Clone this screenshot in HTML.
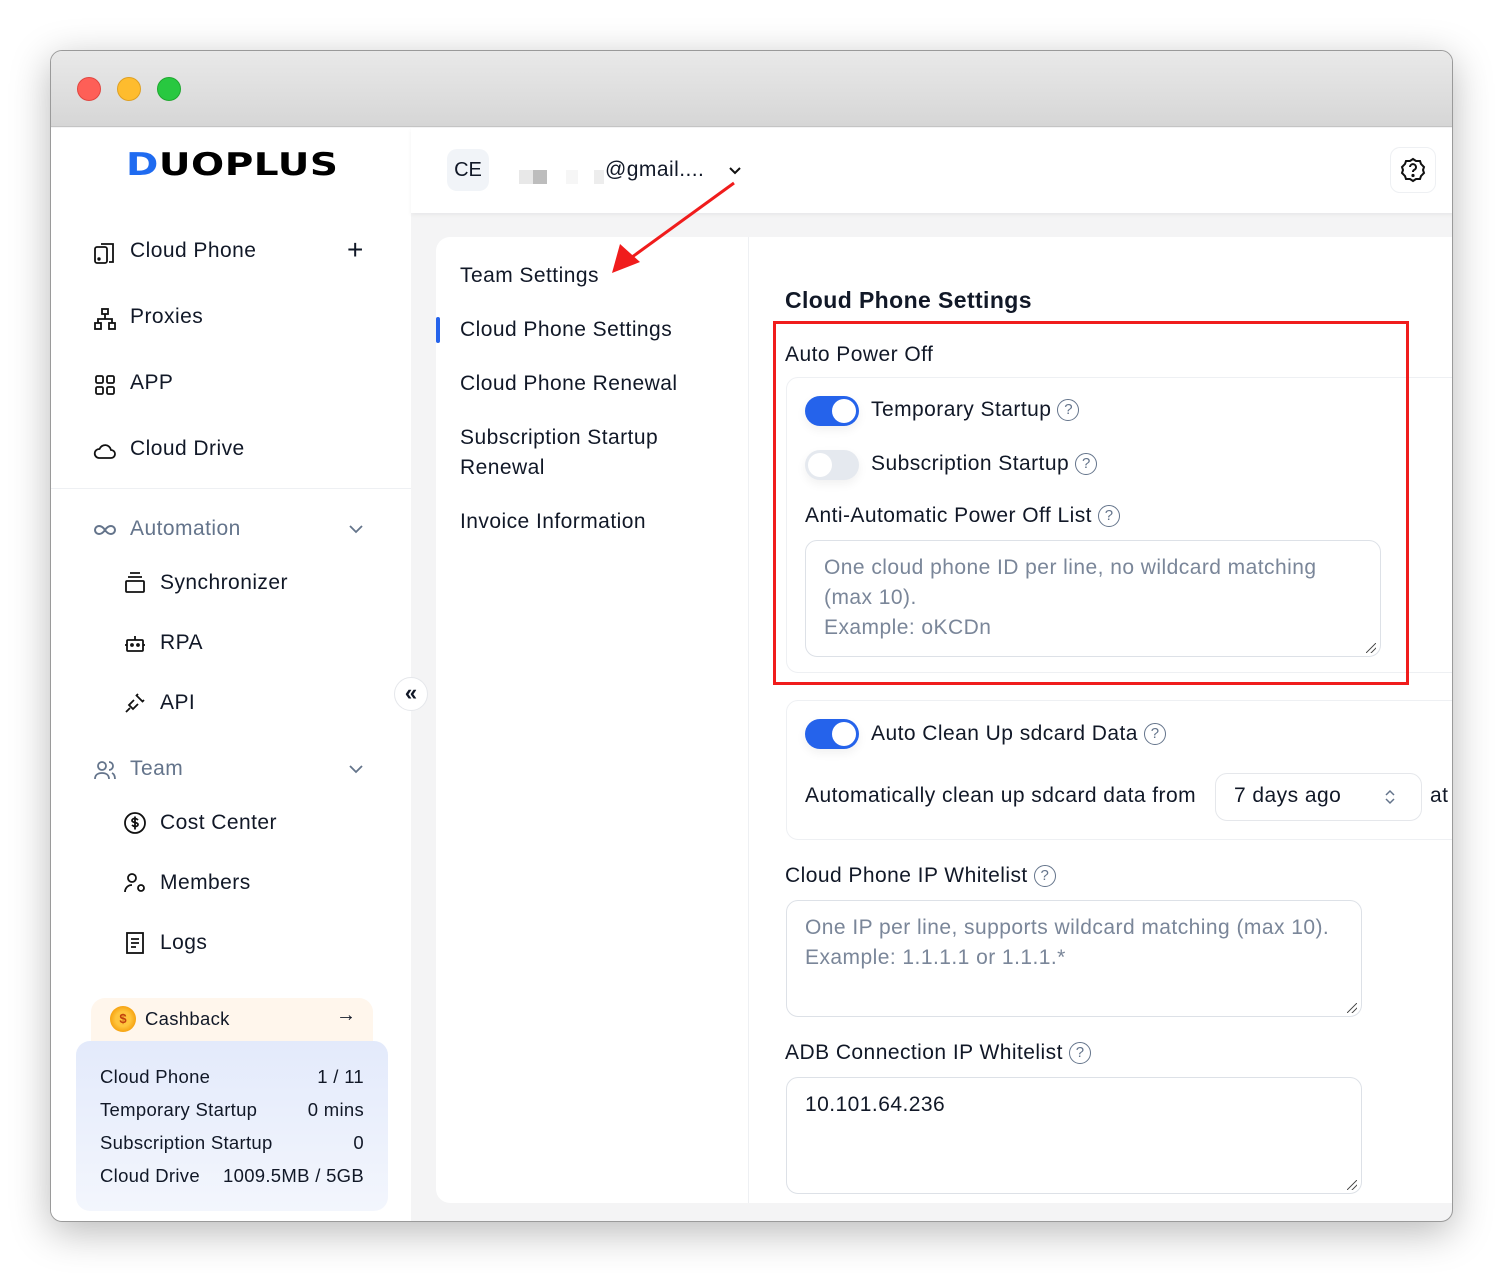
<!DOCTYPE html>
<html><head><meta charset="utf-8"><style>
*{margin:0;padding:0;box-sizing:border-box}
body{width:1503px;height:1273px;background:#fff;font-family:"Liberation Sans",sans-serif;color:#111827;position:relative;overflow:hidden}
.win{position:absolute;left:50px;top:50px;width:1403px;height:1172px;border-radius:12px;overflow:hidden;background:#f4f4f5;box-shadow:0 10px 40px rgba(0,0,0,.28);border:1px solid #9a9a9a}
.tb{position:absolute;left:0;top:0;width:100%;height:76px;background:linear-gradient(#e9e9e9,#d6d6d6);border-bottom:1px solid #c4c4c4}
.dot{position:absolute;top:26px;width:24px;height:24px;border-radius:50%}
.a{position:absolute;white-space:nowrap}
.side{position:absolute;left:0;top:77px;width:360px;height:1100px;background:#fff}
.t20{font-size:21px;letter-spacing:.45px}
.gray{color:#64748b}
.hdr{position:absolute;left:360px;top:77px;width:1043px;height:85px;background:#fff;box-shadow:0 2px 4px rgba(0,0,0,.05)}
.card{position:absolute;left:385px;top:186px;width:1030px;height:966px;background:#fff;border-radius:14px}
.sec{position:absolute;border:1px solid #eef0f3;border-radius:12px}
.ta{position:absolute;border:1px solid #dde1e7;border-radius:12px;font-size:21px;letter-spacing:.45px;line-height:30px;color:#7a8699;padding:12px 18px;white-space:normal}
.tog{position:absolute;width:54px;height:30px;border-radius:15px;box-shadow:0 4px 10px rgba(0,0,0,.06)}
.tog i{position:absolute;top:3px;width:24px;height:24px;border-radius:50%;background:#fff}
.q{display:inline-block;width:22px;height:22px;border:1.4px solid #64748b;border-radius:50%;font-size:15px;line-height:19px;text-align:center;color:#64748b;vertical-align:top;margin-top:1px;margin-left:6px;letter-spacing:0}
.rs{position:absolute;right:4px;bottom:3px;width:10px;height:10px;background:linear-gradient(135deg,transparent 45%,#555 46%,#555 54%,transparent 55%,transparent 70%,#555 71%,#555 79%,transparent 80%)}
.st{font-size:18.5px;letter-spacing:.3px}
</style></head><body>
<div class="win">
<div class="tb"><div class="dot" style="left:26px;background:#fe5f57;border:1px solid #e14640"></div><div class="dot" style="left:66px;background:#febc2e;border:1px solid #dfa023"></div><div class="dot" style="left:106px;background:#28c840;border:1px solid #1fa82f"></div></div>

<div class="side">
<div class="a" style="left:75px;top:19px;font-size:39px;font-weight:900;letter-spacing:.5px;color:#000;font-family:'DejaVu Sans','Liberation Sans',sans-serif;transform:scaleY(.8);transform-origin:left top"><span style="color:#1f6bf0">D</span>UOPLUS</div>
<svg class="a" style="left:42px;top:113px" width="24" height="24" viewBox="0 0 24 24" fill="none" stroke="#111" stroke-width="1.8"><rect x="2" y="6" width="12" height="16" rx="2"/><path d="M8 3h12v18h-4"/><circle cx="6" cy="18" r=".8" fill="#111"/></svg>
<div class="a t20" style="left:79px;top:111px">Cloud Phone</div>
<div class="a" style="left:296px;top:106px;font-size:28px;font-weight:300">+</div>
<svg class="a" style="left:42px;top:179px" width="24" height="24" viewBox="0 0 24 24" fill="none" stroke="#111" stroke-width="1.8"><rect x="9" y="2" width="6" height="5"/><rect x="2" y="16" width="6" height="6"/><rect x="16" y="16" width="6" height="6"/><path d="M12 7v5M5 16v-4h14v4"/></svg>
<div class="a t20" style="left:79px;top:177px">Proxies</div>
<svg class="a" style="left:42px;top:245px" width="24" height="24" viewBox="0 0 24 24" fill="none" stroke="#111" stroke-width="1.8"><rect x="3" y="3" width="7" height="7" rx="1.5"/><rect x="14" y="3" width="7" height="7" rx="1.5"/><rect x="3" y="14" width="7" height="7" rx="1.5"/><rect x="14" y="14" width="7" height="7" rx="1.5"/></svg>
<div class="a t20" style="left:79px;top:243px">APP</div>
<svg class="a" style="left:42px;top:311px" width="24" height="24" viewBox="0 0 24 24" fill="none" stroke="#111" stroke-width="1.8"><path d="M6 19h12a4 4 0 0 0 0-8 6 6 0 0 0-11.5-1A4.5 4.5 0 0 0 6 19z"/></svg>
<div class="a t20" style="left:79px;top:309px">Cloud Drive</div>
<div class="a" style="left:0;top:360px;width:360px;height:1px;background:#eef0f3"></div>
<svg class="a" style="left:42px;top:390px" width="24" height="24" viewBox="0 0 24 24" fill="none" stroke="#64748b" stroke-width="2"><path d="M12 12c-2-3-4-4-6-4a4 4 0 0 0 0 8c2 0 4-1 6-4zm0 0c2 3 4 4 6 4a4 4 0 0 0 0-8c-2 0-4 1-6 4z"/></svg>
<div class="a t20 gray" style="left:79px;top:389px">Automation</div>
<svg class="a" style="left:296px;top:392px" width="18" height="18" viewBox="0 0 18 18" fill="none" stroke="#64748b" stroke-width="1.8"><path d="M3 6l6 6 6-6"/></svg>
<svg class="a" style="left:72px;top:443px" width="24" height="24" viewBox="0 0 24 24" fill="none" stroke="#111" stroke-width="1.8"><path d="M7 2h10M5 6h14"/><rect x="3" y="10" width="18" height="11" rx="1"/></svg>
<div class="a t20" style="left:109px;top:443px">Synchronizer</div>
<svg class="a" style="left:72px;top:503px" width="24" height="24" viewBox="0 0 24 24" fill="none" stroke="#111" stroke-width="1.8"><rect x="4" y="9" width="16" height="11" rx="1"/><path d="M12 5v4M2 14h2M20 14h2"/><circle cx="9" cy="14" r="1"/><circle cx="15" cy="14" r="1"/></svg>
<div class="a t20" style="left:109px;top:503px">RPA</div>
<svg class="a" style="left:72px;top:563px" width="24" height="24" viewBox="0 0 24 24" fill="none" stroke="#111" stroke-width="1.8"><path d="M3 21l4-4M13 4l7 7M9 11l-3 3 4 4 3-3M15 3l-2 2M21 9l-2 2M11 9l-2 2M15 13l-2 2"/></svg>
<div class="a t20" style="left:109px;top:563px">API</div>
<svg class="a" style="left:42px;top:630px" width="24" height="24" viewBox="0 0 24 24" fill="none" stroke="#64748b" stroke-width="1.8"><circle cx="9" cy="8" r="4"/><path d="M2 21c0-4 3-6 7-6s7 2 7 6M16 4a4 4 0 0 1 0 8M19 15c2 1 3 3 3 6"/></svg>
<div class="a t20 gray" style="left:79px;top:629px">Team</div>
<svg class="a" style="left:296px;top:632px" width="18" height="18" viewBox="0 0 18 18" fill="none" stroke="#64748b" stroke-width="1.8"><path d="M3 6l6 6 6-6"/></svg>
<svg class="a" style="left:72px;top:683px" width="24" height="24" viewBox="0 0 24 24" fill="none" stroke="#111" stroke-width="1.8"><circle cx="12" cy="12" r="10"/><path d="M15 9c-1-1-2-1.5-3-1.5-1.5 0-3 .7-3 2s1.5 1.7 3 2 3 .7 3 2-1.5 2-3 2c-1 0-2-.5-3-1.5M12 5.5v13"/></svg>
<div class="a t20" style="left:109px;top:683px">Cost Center</div>
<svg class="a" style="left:72px;top:743px" width="24" height="24" viewBox="0 0 24 24" fill="none" stroke="#111" stroke-width="1.8"><circle cx="9" cy="7" r="4"/><path d="M2 21c0-4 3-7 7-7"/><circle cx="18" cy="17" r="3"/></svg>
<div class="a t20" style="left:109px;top:743px">Members</div>
<svg class="a" style="left:72px;top:803px" width="24" height="24" viewBox="0 0 24 24" fill="none" stroke="#111" stroke-width="1.8"><rect x="4" y="2" width="16" height="20"/><path d="M8 8h8M8 12h8M8 16h5"/></svg>
<div class="a t20" style="left:109px;top:803px">Logs</div>
<div class="a" style="left:40px;top:870px;width:282px;height:70px;background:#fff6ec;border-radius:14px"></div>
<div class="a" style="left:59px;top:878px;width:26px;height:26px;border-radius:50%;background:radial-gradient(circle,#ffc53d 40%,#f59e0b 75%);color:#c2410c;font-size:13px;text-align:center;line-height:26px;font-weight:bold">$</div>
<div class="a st" style="left:94px;top:880px">Cashback</div>
<div class="a" style="left:285px;top:876px;font-size:20px">→</div>
<div class="a st" style="left:25px;top:913px;width:312px;height:170px;background:linear-gradient(#e3eafb,#f3f6fd);border-radius:14px;line-height:33px;padding:19px 24px">
<div style="display:flex;justify-content:space-between"><span>Cloud Phone</span><span>1 / 11</span></div>
<div style="display:flex;justify-content:space-between"><span>Temporary Startup</span><span>0 mins</span></div>
<div style="display:flex;justify-content:space-between"><span>Subscription Startup</span><span>0</span></div>
<div style="display:flex;justify-content:space-between"><span>Cloud Drive</span><span>1009.5MB / 5GB</span></div>
</div>
</div>

<div class="hdr">
<div class="a" style="left:36px;top:21px;width:42px;height:42px;background:#f1f4f8;border-radius:10px;font-size:20px;text-align:center;line-height:42px">CE</div>
<div class="a" style="left:108px;top:42px;width:14px;height:14px;background:#e8e8e8"></div>
<div class="a" style="left:122px;top:42px;width:14px;height:14px;background:#bdbdbd"></div>
<div class="a" style="left:155px;top:42px;width:12px;height:14px;background:#f6f6f6"></div>
<div class="a" style="left:183px;top:42px;width:10px;height:14px;background:#ededed"></div>
<div class="a t20" style="left:194px;top:30px">@gmail....</div>
<svg class="a" style="left:315px;top:34px" width="18" height="18" viewBox="0 0 18 18" fill="none" stroke="#111" stroke-width="2"><path d="M4 6l5 5 5-5"/></svg>
<div class="a" style="left:979px;top:19px;width:46px;height:46px;border:1px solid #eef0f3;border-radius:10px"></div>
<svg class="a" style="left:989px;top:29px" width="26" height="26" viewBox="0 0 26 26" fill="none" stroke="#111" stroke-width="2"><path d="M13 2l3 2 4 0 1 3 3 3-1 3 1 3-3 3-1 3h-4l-3 2-3-2H6l-1-3-3-3 1-3-1-3 3-3 1-3h4z"/><path d="M10 10a3 3 0 1 1 4 3c-1 .5-1 1-1 2"/><circle cx="13" cy="18.5" r=".6" fill="#111"/></svg>
</div>

<div class="a" style="left:343px;top:626px;width:34px;height:34px;border-radius:50%;background:#fff;border:1px solid #e5e7eb;text-align:center;line-height:30px;font-size:22px;font-weight:bold;z-index:3">«</div>

<div class="card">
<div class="a" style="left:312px;top:0;width:1px;height:966px;background:#eef0f3"></div>
<div class="a t20" style="left:24px;top:27px">Team Settings</div>
<div class="a" style="left:0;top:80px;width:4px;height:26px;background:#2563eb;border-radius:2px"></div>
<div class="a t20" style="left:24px;top:81px">Cloud Phone Settings</div>
<div class="a t20" style="left:24px;top:135px">Cloud Phone Renewal</div>
<div class="a t20" style="left:24px;top:186px;line-height:30px">Subscription Startup<br>Renewal</div>
<div class="a t20" style="left:24px;top:273px">Invoice Information</div>

<div class="a" style="left:349px;top:50px;font-size:23px;font-weight:bold;letter-spacing:.4px">Cloud Phone Settings</div>
<div class="a t20" style="left:349px;top:106px">Auto Power Off</div>
<div class="sec" style="left:350px;top:140px;width:700px;height:296px"></div>
<div class="tog" style="left:369px;top:159px;background:#2563eb"><i style="right:3px"></i></div>
<div class="a t20" style="left:435px;top:161px">Temporary Startup<span class="q">?</span></div>
<div class="tog" style="left:369px;top:213px;background:#e5e9ef"><i style="left:3px"></i></div>
<div class="a t20" style="left:435px;top:215px">Subscription Startup<span class="q">?</span></div>
<div class="a t20" style="left:369px;top:267px">Anti-Automatic Power Off List<span class="q">?</span></div>
<div class="ta" style="left:369px;top:303px;width:576px;height:117px">One cloud phone ID per line, no wildcard matching<br>(max 10).<br>Example: oKCDn<div class="rs"></div></div>

<div class="sec" style="left:350px;top:463px;width:700px;height:140px"></div>
<div class="tog" style="left:369px;top:482px;background:#2563eb"><i style="right:3px"></i></div>
<div class="a t20" style="left:435px;top:485px">Auto Clean Up sdcard Data<span class="q">?</span></div>
<div class="a t20" style="left:369px;top:547px">Automatically clean up sdcard data from</div>
<div class="a" style="left:779px;top:536px;width:207px;height:48px;border:1px solid #e5e7eb;border-radius:12px"></div>
<div class="a t20" style="left:798px;top:547px">7 days ago</div>
<svg class="a" style="left:947px;top:550px" width="14" height="20" viewBox="0 0 14 20" fill="none" stroke="#64748b" stroke-width="1.5"><path d="M3 8l4-4 4 4M3 12l4 4 4-4"/></svg>
<div class="a t20" style="left:994px;top:547px">at</div>

<div class="a t20" style="left:349px;top:627px">Cloud Phone IP Whitelist<span class="q">?</span></div>
<div class="ta" style="left:350px;top:663px;width:576px;height:117px">One IP per line, supports wildcard matching (max 10).<br>Example: 1.1.1.1 or 1.1.1.*<div class="rs"></div></div>
<div class="a t20" style="left:349px;top:804px">ADB Connection IP Whitelist<span class="q">?</span></div>
<div class="ta" style="left:350px;top:840px;width:576px;height:117px;color:#111827">10.101.64.236<div class="rs"></div></div>
</div>
</div>

<div class="a" style="left:773px;top:321px;width:636px;height:364px;border:3px solid #f01c1c"></div>
<svg class="a" style="left:600px;top:180px" width="140" height="100" viewBox="0 0 140 100"><path d="M134 3L28 80" stroke="#f01c1c" stroke-width="3"/><path d="M12 93L20 64 40 82z" fill="#f01c1c"/></svg>
</body></html>
